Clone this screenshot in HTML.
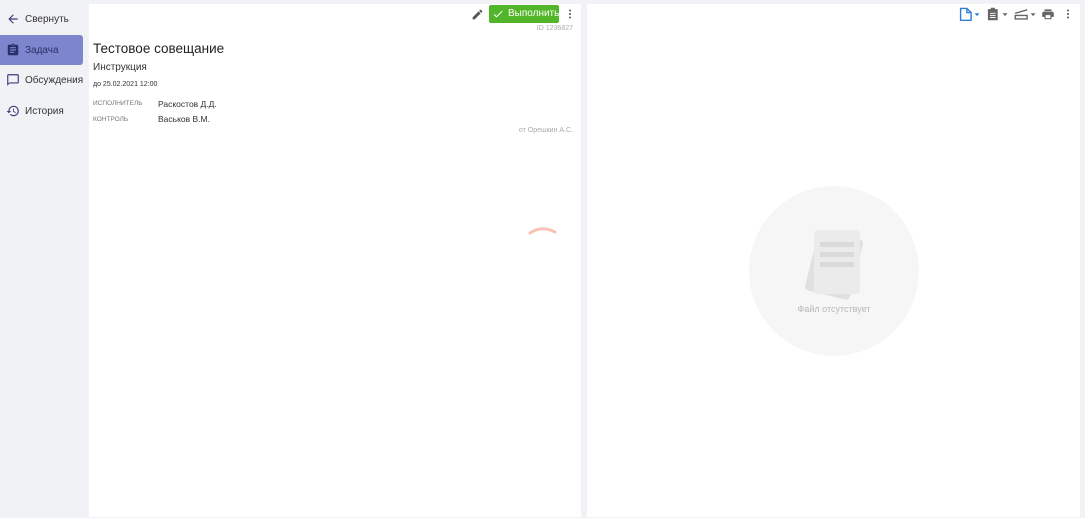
<!DOCTYPE html>
<html><head><meta charset="utf-8"><style>
*{margin:0;padding:0;box-sizing:border-box}
body{width:1085px;height:518px;background:#f1f2f5;font-family:"Liberation Sans",Arial,sans-serif;position:relative;overflow:hidden;color:#222}
.nav{position:absolute;left:0;width:83px;height:30px;display:flex;align-items:center;font-size:10px;color:#333}
.nav svg{position:absolute;left:6px}
.nav span{position:absolute;left:25px}
.sel{background:#7d86cc;border-radius:0 3px 3px 0;color:#2a2f6a}
.p{position:absolute;background:#fff;top:4px;height:513px}
.abs{position:absolute}
</style></head><body>
<div class="nav" style="top:4px"><svg width="14" height="14" viewBox="0 0 24 24"><path d="M20 11H7.8l5.6-5.6L12 4l-8 8 8 8 1.4-1.4L7.8 13H20z" fill="#3a3f7a"/></svg><span>Свернуть</span></div>
<div class="nav sel" style="top:35px"><svg width="14" height="14" viewBox="0 0 24 24"><path d="M19 3h-4.2C14.4 1.8 13.3 1 12 1s-2.4.8-2.8 2H5c-1.1 0-2 .9-2 2v14c0 1.1.9 2 2 2h14c1.1 0 2-.9 2-2V5c0-1.1-.9-2-2-2zm-7 0c.6 0 1 .4 1 1s-.4 1-1 1-1-.4-1-1 .4-1 1-1zm2 14H7v-2h7v2zm3-4H7v-2h10v2zm0-4H7V7h10v2z" fill="#2a2f6a"/></svg><span>Задача</span></div>
<div class="nav" style="top:65px"><svg width="14" height="14" viewBox="0 0 24 24"><path d="M20 2H4c-1.1 0-2 .9-2 2v18l4-4h14c1.1 0 2-.9 2-2V4c0-1.1-.9-2-2-2zm0 14H6l-2 2V4h16v12z" fill="#3a3f7a"/></svg><span>Обсуждения</span></div>
<div class="nav" style="top:96px"><svg width="14" height="14" viewBox="0 0 24 24"><path d="M13 3a9 9 0 0 0-9 9H1l3.9 3.9L9 12H6a7 7 0 1 1 2.1 5l-1.4 1.4A9 9 0 1 0 13 3zm-1 5v5l4.3 2.5.7-1.2-3.5-2.1V8z" fill="#3a3f7a"/></svg><span>История</span></div>

<div class="p" style="left:89px;width:492px">
 <svg class="abs" style="left:382px;top:4px" width="13" height="13" viewBox="0 0 24 24"><path d="M3 17.2V21h3.8l11-11-3.8-3.8zM20.7 7c.4-.4.4-1 0-1.4l-2.3-2.3c-.4-.4-1-.4-1.4 0L15.1 5.1l3.8 3.8z" fill="#555"/></svg>
 <div class="abs" style="left:400px;top:1px;width:70px;height:18px;background:#52b52a;border-radius:2px;color:#fff;font-size:10px;line-height:18px;padding-left:19px;white-space:nowrap">Выполнить</div>
 <svg class="abs" style="left:403px;top:4px" width="12" height="12" viewBox="0 0 24 24"><path d="M9 16.2 4.8 12l-1.4 1.4L9 19 21 7l-1.4-1.4z" fill="#fff"/></svg>
 <svg class="abs" style="left:475px;top:4px" width="12" height="12" viewBox="0 0 24 24"><circle cx="12" cy="5" r="2" fill="#555"/><circle cx="12" cy="12" r="2" fill="#555"/><circle cx="12" cy="19" r="2" fill="#555"/></svg>
 <div class="abs" style="right:8px;top:21px;font-size:7px;color:#aaa">ID 1236827</div>
 <div class="abs" style="left:4px;top:37px;font-size:13.5px;color:#222">Тестовое совещание</div>
 <div class="abs" style="left:4px;top:58px;font-size:10px;color:#333">Инструкция</div>
 <div class="abs" style="left:4px;top:77px;font-size:7px;color:#333">до 25.02.2021 12:00</div>
 <div class="abs" style="left:4px;top:96px;font-size:6.5px;color:#777">ИСПОЛНИТЕЛЬ</div>
 <div class="abs" style="left:69px;top:95px;font-size:8.5px;color:#333">Раскостов Д.Д.</div>
 <div class="abs" style="left:4px;top:112px;font-size:6.5px;color:#777">КОНТРОЛЬ</div>
 <div class="abs" style="left:69px;top:110px;font-size:8.5px;color:#333">Васьков В.М.</div>
 <div class="abs" style="right:8px;top:123px;font-size:7px;color:#aaa">от Орешкин А.С.</div>
 <svg class="abs" style="left:438px;top:221px" width="32" height="12"><path d="M3 8 Q15 0 28 7" stroke="#f6c3b3" stroke-width="3" fill="none" stroke-linecap="round"/></svg>
</div>

<div class="p" style="left:587px;width:493px">
 <svg class="abs" style="left:370px;top:3px" width="24" height="14" viewBox="0 0 34 20"><path d="M5 2h9l6 6v11H5z M14 2v6h6" stroke="#2d7fd8" stroke-width="2" fill="none"/><path d="M25 9h7l-3.5 4z" fill="#2d7fd8"/></svg>
 <svg class="abs" style="left:398px;top:3px" width="24" height="14" viewBox="0 0 34 20"><path d="M4 3h4v-2h6v2h4v16H4z" fill="#666"/><path d="M7 9h8M7 12h8M7 15h8" stroke="#fff" stroke-width="1.3"/><path d="M25 9h7l-3.5 4z" fill="#666"/></svg>
 <svg class="abs" style="left:426px;top:3px" width="24" height="14" viewBox="0 0 34 20"><path d="M3 9l17-5M3 12h17v5H3z" stroke="#666" stroke-width="2" fill="none"/><path d="M25 9h7l-3.5 4z" fill="#666"/></svg>
 <svg class="abs" style="left:454px;top:3px" width="14" height="14" viewBox="0 0 24 24"><path d="M19 8H5c-1.7 0-3 1.3-3 3v6h4v4h12v-4h4v-6c0-1.7-1.3-3-3-3zm-3 11H8v-5h8v5zm2-15H6v3h12z" fill="#666"/></svg>
 <svg class="abs" style="left:475px;top:4px" width="12" height="12" viewBox="0 0 24 24"><circle cx="12" cy="5" r="2" fill="#555"/><circle cx="12" cy="12" r="2" fill="#555"/><circle cx="12" cy="19" r="2" fill="#555"/></svg>
 <div class="abs" style="left:162px;top:182px;width:170px;height:170px;border-radius:50%;background:#f6f6f6"></div>
 <svg class="abs" style="left:212px;top:222px" width="70" height="78" viewBox="0 0 70 78"><rect x="12" y="8" width="46" height="62" rx="4" fill="#e0e0e0" transform="rotate(14 35 39)"/><rect x="15" y="4" width="46" height="64" rx="4" fill="#ebebeb"/><rect x="21" y="16" width="34" height="5" fill="#dadada"/><rect x="21" y="26" width="34" height="5" fill="#dadada"/><rect x="21" y="36" width="34" height="5" fill="#dadada"/></svg>
 <div class="abs" style="left:162px;top:300px;width:170px;text-align:center;font-size:9px;color:#b8b8b8">Файл отсутствует</div>
</div>
</body></html>
